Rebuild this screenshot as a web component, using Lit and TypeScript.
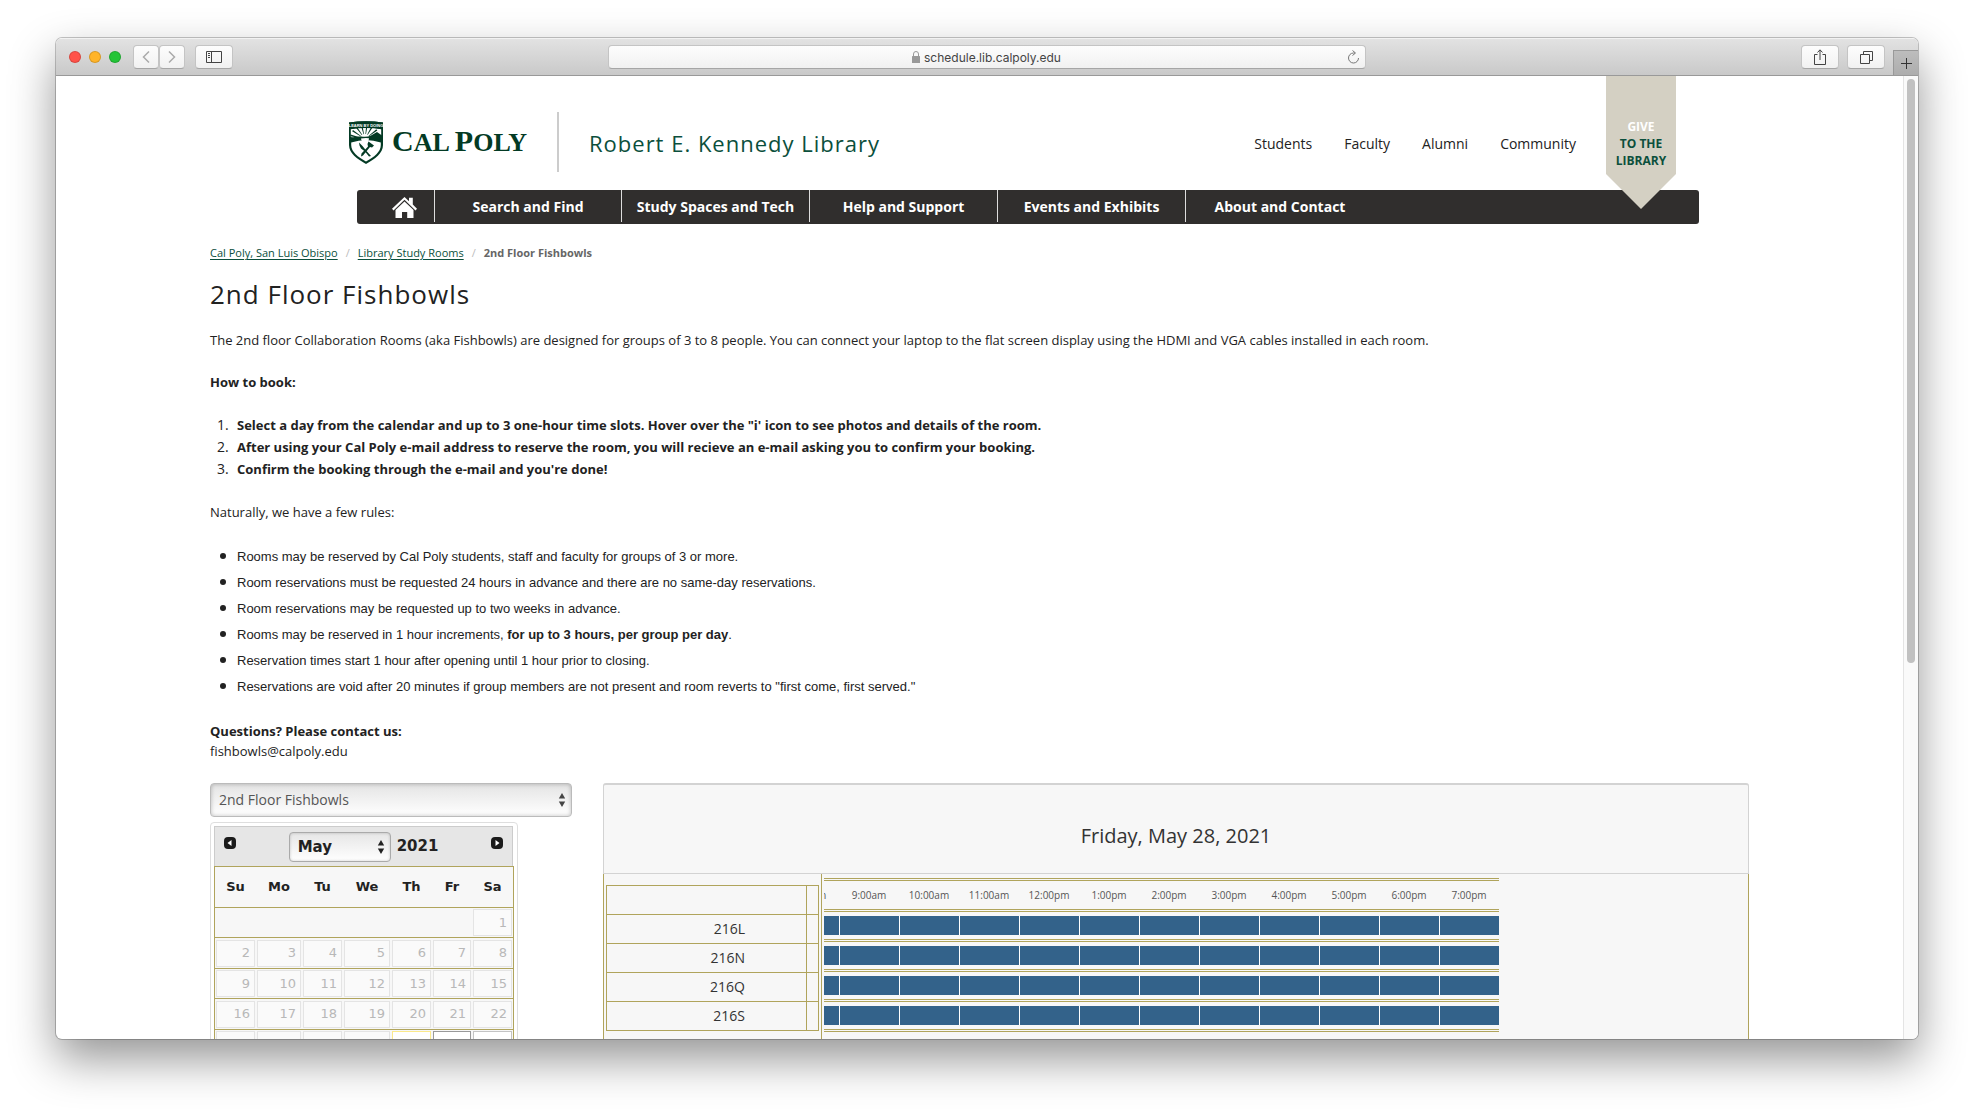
import { LitElement, html, svg, css, nothing } from "lit";
import { customElement, property } from "lit/decorators.js";
import { classMap } from "lit/directives/class-map.js";

const reset = css`
  *, *::before, *::after { box-sizing: border-box; }
  button, input, select { font: inherit; color: inherit; margin: 0; }
  button { padding: 0; cursor: pointer; }
  svg { display: block; }
`;

const sortArrows = html`<svg class="arrows" width="8" height="14" viewBox="0 0 8 14" aria-hidden="true">
  <path d="M4 0 7.2 5.6H.8zM4 14 .8 8.4h6.4z" fill="currentColor" />
</svg>`;

@customElement("browser-toolbar")
class BrowserToolbar extends LitElement {
  static styles = [reset, css`
    :host {
      box-sizing: border-box;
      display: grid;
      grid-template-columns: 1fr minmax(0, 758px) 1fr;
      height: 38px;
      background: linear-gradient(#e2e2e2, #c9c9c9);
      border-top: 1px solid #f2f2f2;
      border-bottom: 1px solid #999;
      color: #444;
    }
    .left, .right { display: flex; align-items: center; }
    .left { padding-left: 13px; }
    .right { justify-content: flex-end; gap: 8px; }
    .lights { display: flex; gap: 8px; margin-right: 12px; }
    .light { width: 12px; height: 12px; border-radius: 50%; border: 1px solid rgba(0, 0, 0, 0.15); }
    .close { background: #ff5249; }
    .minimise { background: #ffb429; }
    .zoom { background: #23c437; }
    .btn {
      display: grid;
      place-items: center;
      height: 24px;
      width: 38px;
      border: 1px solid #c4c4c4;
      border-bottom-color: #a6a6a6;
      border-radius: 4px;
      background: linear-gradient(#fdfdfd, #f1f1f1);
    }
    .step { width: 26px; color: #aaa; }
    .sidebar { margin-left: 10px; }
    .address {
      align-self: center;
      display: grid;
      grid-template-columns: 24px 1fr 24px;
      align-items: center;
      height: 24px;
      border: 1px solid #c4c4c4;
      border-bottom-color: #a6a6a6;
      border-radius: 4px;
      background: linear-gradient(#fdfdfd, #f1f1f1);
    }
    .site { grid-column: 2; display: flex; align-items: center; justify-content: center; gap: 4px; }
    .url {
      width: 138px;
      padding: 1px 0 0;
      border: 0;
      outline: 0;
      background: none;
      font: 12px/20px Inter, "Liberation Sans", sans-serif;
      color: #444;
    }
    .reload { border: 0; background: none; color: #777; display: grid; place-items: center; }
    .new-tab {
      align-self: flex-end;
      width: 25px;
      height: 25px;
      display: grid;
      place-items: center;
      border: solid #999;
      border-width: 1px 0 0 1px;
      background: linear-gradient(#bdbdbd, #adadad);
    }
  `];

  render() {
    return html`
      <div class="left">
        <div class="lights">
          <span class="light close"></span><span class="light minimise"></span><span class="light zoom"></span>
        </div>
        <button class="btn step" aria-label="Back">
          <svg width="8" height="14" viewBox="0 0 8 14" fill="none" stroke="currentColor" stroke-width="1.5"><path d="M7 1.5 1.5 7 7 12.5" /></svg>
        </button>
        <button class="btn step" aria-label="Forward">
          <svg width="8" height="14" viewBox="0 0 8 14" fill="none" stroke="currentColor" stroke-width="1.5"><path d="M1 1.5 6.5 7 1 12.5" /></svg>
        </button>
        <button class="btn sidebar" aria-label="Sidebar">
          <svg width="16" height="12" viewBox="0 0 16 12" fill="none" stroke="currentColor"><path d="M.5.5h15v11H.5zM5.5.5v11M2 2.5h2M2 4.5h2M2 6.5h2" /></svg>
        </button>
      </div>
      <div class="address">
        <div class="site">
          <svg width="8" height="12" viewBox="0 0 8 12"><rect y="5" width="8" height="7" rx=".5" fill="#999" /><path d="M1.5 5V3a2.5 2.5 0 0 1 5 0V5" fill="none" stroke="#999" /></svg>
          <input class="url" aria-label="Address" .value=${"schedule.lib.calpoly.edu"} />
        </div>
        <button class="reload" aria-label="Reload">
          <svg width="13" height="15" viewBox="0 0 13 15" fill="none" stroke="currentColor"><path d="M11.5 8a5 5 0 1 1-5-5H8M5.500.5 8.500 3 5.500 5.500" /></svg>
        </button>
      </div>
      <div class="right">
        <button class="btn" aria-label="Share">
          <svg width="12" height="16" viewBox="0 0 12 16" fill="none" stroke="currentColor"><path d="M3.5 5.500h-3v10h11v-10h-3M6 11V1M3.500 3.500 6 .8l2.500 2.700" /></svg>
        </button>
        <button class="btn" aria-label="Show tabs">
          <svg width="13" height="13" viewBox="0 0 13 13" fill="none" stroke="currentColor"><path d="M.5 3.500h9v9h-9zM3.500 3V.5h9v9H10" /></svg>
        </button>
        <button class="new-tab" aria-label="New tab">
          <svg width="11" height="11" viewBox="0 0 11 11" stroke="#333"><path d="M5.500 0v11M0 5.500h11" /></svg>
        </button>
      </div>
    `;
  }
}

@customElement("site-header")
class SiteHeader extends LitElement {
  static styles = [reset, css`
    :host {
      display: block;
      position: relative;
      padding: 36px 50px 0 147px;
      font-family: "Open Sans", "Noto Sans", sans-serif;
    }
    a { text-decoration: none; color: inherit; }
    .masthead { display: flex; align-items: center; height: 60px; padding-right: 123px; }
    .brand { display: flex; align-items: center; gap: 9px; margin-left: -8px; width: 208px; color: #033a24; }
    .name { font: bold 26px/30px "Liberation Serif", serif; white-space: nowrap; }
    .cap { font-size: 30px; }
    .motto { font: bold 4px "Liberation Sans", sans-serif; fill: #fff; }
    .library {
      align-self: stretch;
      display: flex;
      align-items: center;
      padding: 2px 0 0 30px;
      border-left: 2px solid #ccc;
      font-size: 22px;
      line-height: 30px;
      letter-spacing: 1px;
      color: #0b4f3c;
      white-space: nowrap;
    }
    .audience { display: flex; gap: 32px; margin-left: auto; padding-top: 4px; font-size: 14px; line-height: 20px; color: #222; }
    .bar {
      display: flex;
      height: 34px;
      margin-top: 18px;
      border-radius: 3px;
      background: #302e2d;
      color: #fff;
      font-size: 14px;
      font-weight: bold;
      line-height: 34px;
    }
    .item { width: 188px; height: 32px; text-align: center; white-space: nowrap; border-right: 1px solid #ddd; }
    .item:last-child { border-right: 0; }
    .home { width: 78px; display: flex; align-items: center; justify-content: flex-end; padding: 3px 17px 0 0; }
    .home + .item { width: 187px; }
    .give {
      position: absolute;
      top: 0;
      right: 73px;
      width: 70px;
      height: 133px;
      padding-top: 42px;
      clip-path: polygon(0 0, 100% 0, 100% 98px, 50% 100%, 0 98px);
      background: #d4d0c3;
      color: #0b4f3c;
      text-align: center;
      font-size: 12px;
      font-weight: bold;
      line-height: 17px;
    }
    .give .lead { color: #fff; display: block; }
  `];

  render() {
    const rays = [-76, -56, -36, -14, 8, 30, 52, 74];
    return html`
      <div class="masthead">
        <a class="brand" href="#home" aria-label="Cal Poly">
          <svg class="shield" width="34" height="43" viewBox="0 0 34 43">
            <path d="M0 1.500Q17-1 34 1.500V24c0 8-8 14-17 19C8 38 0 32 0 24z" fill="#033a24" />
            <path d="M1.800 8.200Q17 6 32.200 8.200V15l-4-1.500-5 3.500H5l-3.200-1z" fill="#fff" />
            ${rays.map((a) => svg`<path d="M16 18 15.200 3h1.600z" fill="#033a24" transform=${`rotate(${a} 16 18)`} />`)}
            <path d="M0 1.500Q17-1 34 1.500V8Q17 5.500 0 8z" fill="#033a24" />
            <text class="motto" x="17" y="6" text-anchor="middle">LEARN BY DOING</text>
            <circle cx="16" cy="17" r="4" fill="#fff" />
            <path d="M1 17q6-2 11-1.500 6 1 10-1l6-3.500 5 3.500v5Q17 14.500 1 19.500z" fill="#033a24" />
            <path d="M2.200 21.500Q17 16.500 31.800 21.500V24C31.800 31 25 36 17 40.500 9 36 2.200 31 2.200 24z" fill="#fff" />
            <path d="m10 21.500 3.500 3.500 4 5 4.500 5-2 .5-4-5-4-3-1.500-3zM19.500 20.500l5.500 4-2 2-2-.5-7 8.500-2 1 .5-3 6.500-7-.5-2.500z" fill="#033a24" />
          </svg>
          <span class="name"><span class="cap">C</span>AL <span class="cap">P</span>OLY</span>
        </a>
        <a class="library" href="#library">Robert E. Kennedy Library</a>
        <nav class="audience" aria-label="Audience">
          ${["Students", "Faculty", "Alumni", "Community"].map((t) => html`<a href="#${t.toLowerCase()}">${t}</a>`)}
        </nav>
      </div>
      <nav class="bar" aria-label="Main">
        <a class="item home" href="#home" aria-label="Home">
          <svg width="25" height="21" viewBox="0 0 25 21">
            <path d="M12.500 0 17 4.200V.8h3.800v6.800L25 11.800l-1.500 1.700-11-10.700-11 10.700L0 11.800z" fill="#fff" />
            <path d="M12.500 4.500 21.500 13v8h-6.300v-6H10v6H3.500v-8z" fill="#fff" />
          </svg>
        </a>
        ${["Search and Find", "Study Spaces and Tech", "Help and Support", "Events and Exhibits", "About and Contact"].map(
          (t) => html`<a class="item" href="#${t.toLowerCase().replace(/ /g, "-")}">${t}</a>`
        )}
      </nav>
      <a class="give" href="#give"><span class="lead">GIVE</span>TO THE LIBRARY</a>
    `;
  }
}

@customElement("month-calendar")
class MonthCalendar extends LitElement {
  @property({ type: Number }) today = 27;
  @property({ type: Number }) selected = 28;

  static styles = [reset, css`
    :host {
      box-sizing: border-box;
      display: block;
      width: 308px;
      padding: 3px;
      border: 1px solid #dedede;
      border-radius: 4px;
      background: #fff;
      font-family: Verdana, "DejaVu Sans", sans-serif;
      color: #222;
    }
    .head {
      display: flex;
      align-items: center;
      justify-content: space-between;
      height: 40px;
      margin-right: 1px;
      padding: 0 9px;
      border: 1px solid #ccc;
      border-bottom: 0;
      background: #e6e6e6;
    }
    .turn { width: 12px; height: 12px; border: 0; border-radius: 4px; background: #1b1b1b; margin-bottom: 8px; }
    .title { display: flex; align-items: center; gap: 6px; font-size: 15px; font-weight: bold; line-height: 20px; }
    .year { padding-bottom: 2px; }
    .month { position: relative; color: #222; }
    .month select {
      appearance: none;
      display: block;
      width: 102px;
      height: 30px;
      padding: 0 24px 0 8px;
      border: 1px solid #aaa;
      border-radius: 4px;
      background: linear-gradient(#e6e6e6, #fff);
      box-shadow: inset 0 0 3px rgba(0, 0, 0, 0.2);
    }
    .arrows { position: absolute; right: 6px; top: 8px; pointer-events: none; }
    table {
      width: 100%;
      table-layout: fixed;
      border-collapse: separate;
      border-spacing: 0;
      border: 1px solid #b0a45c;
      border-bottom: 0;
      background: #f7f7f7;
      font-size: 13px;
      line-height: 16px;
    }
    th, td { border-bottom: 1px solid #b0a45c; padding: 1px; }
    th { height: 41px; }
    td { height: 30px; }
    tr:nth-child(even) td { height: 31px; }
    .day {
      display: block;
      width: 100%;
      height: 27px;
      padding-right: 4px;
      border: 1px solid #e4e4e4;
      background: #fafafa;
      color: #b8b8b8;
      text-align: right;
    }
    .open { background: #fff; border-color: #c4c4c4; color: #555; }
    .today { border-color: #fbe98b; }
    .selected { border-color: #999; }
  `];

  render() {
    const cells = [...Array(6).fill(0), ...Array.from({ length: 31 }, (_, i) => i + 1)];
    const weeks: number[][] = [];
    for (let i = 0; i < cells.length; i += 7) weeks.push(cells.slice(i, i + 7));
    return html`
      <div class="head">
        <button class="turn" aria-label="Previous month">
          <svg width="12" height="12" viewBox="0 0 12 12"><path d="M7.500 3v6l-4-3z" fill="#fff" /></svg>
        </button>
        <div class="title">
          <div class="month">
            <select aria-label="Month"><option>May</option></select>
            ${sortArrows}
          </div>
          <span class="year">2021</span>
        </div>
        <button class="turn" aria-label="Next month">
          <svg width="12" height="12" viewBox="0 0 12 12"><path d="M4.500 3v6l4-3z" fill="#fff" /></svg>
        </button>
      </div>
      <table>
        <colgroup>${[41, 46, 41, 48, 41, 40, 41].map((w) => html`<col style="width:${w}px" />`)}</colgroup>
        <thead><tr>${["Su", "Mo", "Tu", "We", "Th", "Fr", "Sa"].map((d) => html`<th scope="col">${d}</th>`)}</tr></thead>
        <tbody>
          ${weeks.map((week) => html`<tr>${week.map((d) => html`<td>${d
            ? html`<button class=${classMap({
                day: true,
                open: d >= this.today,
                today: d === this.today,
                selected: d === this.selected,
              })} ?disabled=${d < this.today}>${d}</button>`
            : nothing}</td>`)}</tr>`)}
        </tbody>
      </table>
    `;
  }
}

@customElement("room-schedule")
class RoomSchedule extends LitElement {
  private rooms = ["216L", "216N", "216Q", "216S"];
  private hours = [
    "8:00am", "9:00am", "10:00am", "11:00am", "12:00pm", "1:00pm",
    "2:00pm", "3:00pm", "4:00pm", "5:00pm", "6:00pm", "7:00pm",
  ];

  static styles = [reset, css`
    :host {
      display: block;
      background: #f7f7f7;
      border-radius: 3px 3px 0 0;
      font-family: "Open Sans", "Noto Sans", sans-serif;
      color: #333;
    }
    .head {
      display: grid;
      place-items: center;
      height: 91px;
      padding-top: 14px;
      border: 1px solid #d3d3d3;
      border-top-width: 2px;
      border-radius: 3px 3px 0 0;
    }
    .date { margin: 0; font-size: 20px; font-weight: normal; line-height: 28px; }
    .body { display: flex; min-height: 240px; border: solid #b0a45c; border-width: 0 1px 1px; }
    .rooms { flex: none; width: 218px; padding: 11px 2px; border-right: 1px solid #b0a45c; }
    .rooms table { width: 213px; table-layout: fixed; border-collapse: collapse; }
    .rooms th, .rooms td { height: 29px; padding: 0; border: 1px solid #b0a45c; }
    .rooms th { padding-right: 61px; text-align: right; font-size: 14px; font-weight: normal; line-height: 20px; }
    .rooms .info { width: 12px; }
    .viewport {
      flex: none;
      display: flex;
      justify-content: flex-end;
      align-items: flex-start;
      width: 675px;
      margin: 4px 0 0 2px;
      overflow: hidden;
    }
    .slots { flex: none; width: 720px; table-layout: fixed; border-collapse: separate; border-spacing: 0; }
    .slots th {
      height: 34px;
      padding: 0;
      border: 3px double #b0a45c;
      border-width: 3px 0;
      font-size: 10px;
      font-weight: normal;
      line-height: 14px;
      color: #555;
    }
    .slots td { height: 30px; padding: 4px 0; border-bottom: 3px double #b0a45c; }
    .slot { display: block; width: 100%; height: 19px; border: 0; border-left: 1px solid #fff; background: #33628a; }
  `];

  render() {
    return html`
      <div class="head"><h2 class="date">Friday, May 28, 2021</h2></div>
      <div class="body">
        <div class="rooms">
          <table aria-label="Rooms">
            <colgroup><col /><col class="info" /></colgroup>
            <tbody>
              <tr><td></td><td></td></tr>
              ${this.rooms.map((r) => html`<tr><th scope="row">${r}</th><td></td></tr>`)}
            </tbody>
          </table>
        </div>
        <div class="viewport">
          <table class="slots" aria-label="Time slots">
            <thead><tr>${this.hours.map((h) => html`<th scope="col">${h}</th>`)}</tr></thead>
            <tbody>
              ${this.rooms.map((r) => html`<tr>${this.hours.map(
                (h) => html`<td><button class="slot" aria-label="${r} ${h}"></button></td>`
              )}</tr>`)}
            </tbody>
          </table>
        </div>
      </div>
    `;
  }
}

@customElement("app-root")
class AppRoot extends LitElement {
  static styles = [reset, css`
    :host {
      display: block;
      box-sizing: border-box;
      height: 100vh;
      padding: 38px 56px 74px;
      background: #fff;
      font: 13px/20px "Open Sans", "Noto Sans", sans-serif;
      color: #222;
    }
    .window {
      display: flex;
      flex-direction: column;
      height: 100%;
      overflow: hidden;
      border-radius: 6px;
      background: #fff;
      box-shadow: 0 0 0 1px rgba(0, 0, 0, 0.22), 0 20px 46px rgba(0, 0, 0, 0.42);
    }
    .view { flex: 1; min-height: 0; display: flex; }
    .page { flex: 1; min-width: 0; overflow: hidden; }
    .scrollbar { width: 15px; padding: 3px; border-left: 1px solid #e4e4e4; background: #fafafa; }
    .thumb { width: 8px; height: 61%; border-radius: 4px; background: #c1c1c1; }
    .container { max-width: 1539px; margin: 0 auto; }
    .crumbs {
      display: flex;
      gap: 8px;
      margin: 20px 0 14px;
      font-size: 11px;
      line-height: 18px;
      color: #bbb;
    }
    .crumbs a { color: #0b4f3c; text-underline-offset: 2px; }
    .crumbs strong { color: #666; }
    h1 { margin: 0 0 18px; font-size: 26px; font-weight: normal; line-height: 36px; letter-spacing: 1px; }
    p { margin: 0 0 22px; }
    ol, ul { margin: 0 0 22px; padding: 0 0 0 27px; list-style: none; }
    .steps li { font-weight: bold; line-height: 22px; }
    .steps li::before {
      content: counter(list-item) ".";
      display: inline-block;
      width: 20px;
      margin-left: -20px;
      font-size: 14px;
      font-weight: normal;
    }
    .rules { margin-bottom: 21px; font-family: "Liberation Sans", Arial, sans-serif; line-height: 26px; }
    .rules li::before {
      content: "";
      display: inline-block;
      width: 6px;
      height: 6px;
      margin: 0 11px 0 -17px;
      border-radius: 50%;
      background: #222;
      vertical-align: 2px;
    }
    .booking { display: grid; grid-template-columns: 362px minmax(0, 1fr); gap: 31px; align-items: start; }
    .side { display: grid; gap: 5px; }
    .area { position: relative; color: #444; }
    .area select {
      appearance: none;
      display: block;
      width: 100%;
      height: 34px;
      padding: 0 24px 0 8px;
      border: 1px solid #bbb;
      border-radius: 4px;
      background: linear-gradient(#e4e4e4, #fff);
      box-shadow: inset 0 0 4px rgba(0, 0, 0, 0.25);
      font-size: 14px;
      color: #555;
    }
    .arrows { position: absolute; right: 6px; top: 10px; pointer-events: none; }
  `];

  render() {
    return html`
      <div class="window">
        <browser-toolbar></browser-toolbar>
        <div class="view">
          <div class="page">
            <div class="container">
              <site-header></site-header>
              <main>
                <nav class="crumbs" aria-label="Breadcrumb">
                  <a href="#calpoly">Cal Poly, San Luis Obispo</a><span>/</span>
                  <a href="#rooms">Library Study Rooms</a><span>/</span>
                  <strong>2nd Floor Fishbowls</strong>
                </nav>
                <h1>2nd Floor Fishbowls</h1>
                <p>The 2nd floor Collaboration Rooms (aka Fishbowls) are designed for groups of 3 to 8 people. You can connect your laptop to the flat screen display using the HDMI and VGA cables installed in each room.</p>
                <p><strong>How to book:</strong></p>
                <ol class="steps">
                  <li>Select a day from the calendar and up to 3 one-hour time slots. Hover over the "i' icon to see photos and details of the room.</li>
                  <li>After using your Cal Poly e-mail address to reserve the room, you will recieve an e-mail asking you to confirm your booking.</li>
                  <li>Confirm the booking through the e-mail and you're done!</li>
                </ol>
                <p>Naturally, we have a few rules:</p>
                <ul class="rules">
                  <li>Rooms may be reserved by Cal Poly students, staff and faculty for groups of 3 or more.</li>
                  <li>Room reservations must be requested 24 hours in advance and there are no same-day reservations.</li>
                  <li>Room reservations may be requested up to two weeks in advance.</li>
                  <li>Rooms may be reserved in 1 hour increments, <strong>for up to 3 hours, per group per day</strong>.</li>
                  <li>Reservation times start 1 hour after opening until 1 hour prior to closing.</li>
                  <li>Reservations are void after 20 minutes if group members are not present and room reverts to "first come, first served."</li>
                </ul>
                <p><strong>Questions? Please contact us:</strong><br />fishbowls@calpoly.edu</p>
                <section class="booking">
                  <div class="side">
                    <div class="area">
                      <select aria-label="Area"><option>2nd Floor Fishbowls</option></select>
                      ${sortArrows}
                    </div>
                    <month-calendar></month-calendar>
                  </div>
                  <room-schedule></room-schedule>
                </section>
              </main>
            </div>
          </div>
          <div class="scrollbar"><div class="thumb"></div></div>
        </div>
      </div>
    `;
  }
}
